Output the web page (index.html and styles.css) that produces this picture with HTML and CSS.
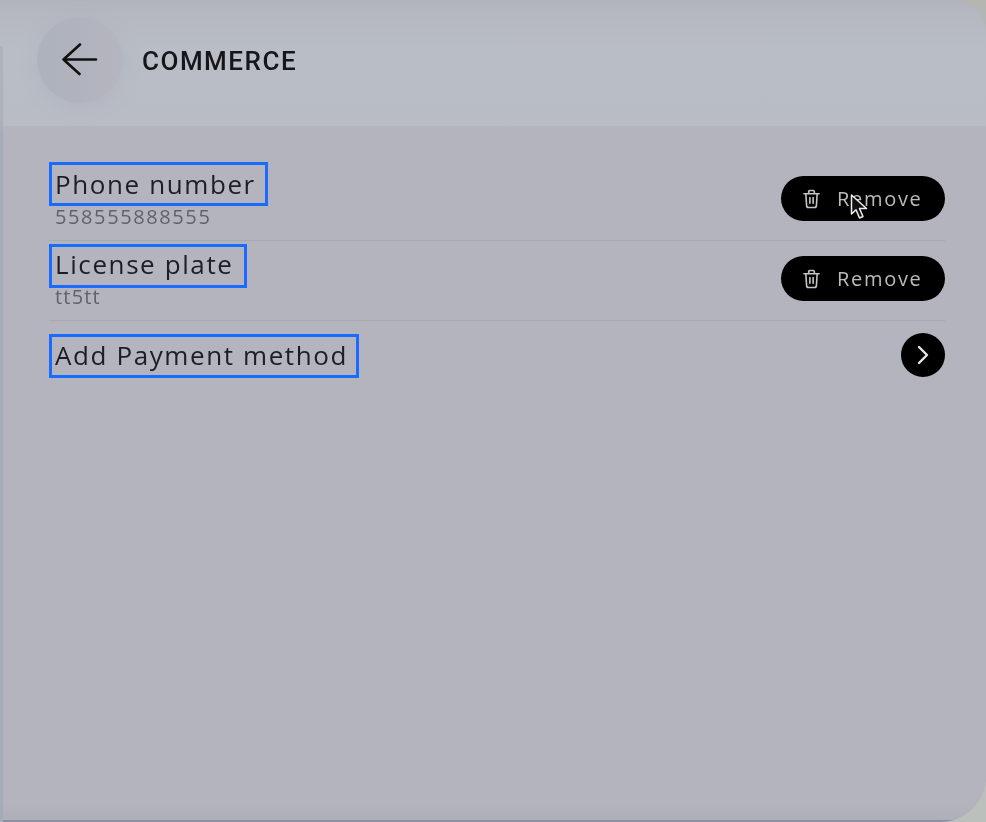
FILE: index.html
```html
<!DOCTYPE html>
<html lang="en">
<head>
<meta charset="utf-8">
<title>Commerce</title>
<link rel="stylesheet" href="styles.css">
</head>
<body>
<main class="panel">
  <header class="topbar">
    <button class="back" aria-label="Back">
      <svg width="36" height="36" viewBox="0 0 36 36" fill="none" stroke="#111" stroke-width="2.6" stroke-linecap="round" stroke-linejoin="round"><path d="M1.500 17.500H34M18 2.500 1.500 17.500 17.500 32"/></svg>
    </button>
    <h1 class="title">COMMERCE</h1>
  </header>
  <section class="content">
    <div class="row row-first">
      <div class="info">
        <div class="label">Phone number</div>
        <div class="value value-digits">558555888555</div>
      </div>
      <button class="remove">
        <svg class="trash" width="17" height="20" viewBox="0 0 18 20" fill="none" stroke="#c4c4c4" stroke-width="1.7" stroke-linecap="round" stroke-linejoin="round"><path d="M1 4.500H17M6 4.500V2.200C6 1.500 6.500 1 7.200 1H10.800C11.500 1 12 1.500 12 2.200V4.500M3 4.500 3.800 17C3.900 18.200 4.500 19 5.800 19H12.200C13.500 19 14.100 18.200 14.200 17L15 4.500M7.300 8.500V14.500M10.700 8.500V14.500"/></svg>
        <span>Remove</span>
      </button>
      <svg class="cursor" width="19" height="26" viewBox="0 0 19 26"><path d="M1.500 1V20L6 15.800 9.500 24 13 22.500 9.500 14.500H16.500Z" fill="#111" stroke="#eee" stroke-width="1.500" stroke-linejoin="round"/></svg>
    </div>
    <div class="row row-second">
      <div class="info">
        <div class="label label-license">License plate</div>
        <div class="value">tt5tt</div>
      </div>
      <button class="remove">
        <svg class="trash" width="17" height="20" viewBox="0 0 18 20" fill="none" stroke="#c4c4c4" stroke-width="1.7" stroke-linecap="round" stroke-linejoin="round"><path d="M1 4.500H17M6 4.500V2.200C6 1.500 6.500 1 7.200 1H10.800C11.500 1 12 1.500 12 2.200V4.500M3 4.500 3.800 17C3.900 18.200 4.500 19 5.800 19H12.200C13.500 19 14.100 18.200 14.200 17L15 4.500M7.300 8.500V14.500M10.700 8.500V14.500"/></svg>
        <span>Remove</span>
      </button>
    </div>
    <div class="row row-last">
      <div class="info">
        <div class="label label-add">Add Payment method</div>
      </div>
      <button class="go" aria-label="Open">
        <svg width="14" height="20" viewBox="0 0 14 20" fill="none" stroke="#e6e6e6" stroke-width="2.400" stroke-linecap="round" stroke-linejoin="round"><path d="M3 2 11 10 3 18"/></svg>
      </button>
    </div>
  </section>
</main>
</body>
</html>
```

FILE: styles.css
```css
* { box-sizing: border-box; }
html, body { margin: 0; height: 100%; }
body {
  width: 986px;
  height: 822px;
  overflow: hidden;
  background: linear-gradient(#b5b6b4, #bcc0bc);
  font-family: "Open Sans", "Noto Sans", sans-serif;
}
.panel {
  position: relative;
  width: 986px;
  height: 822px;
  border-radius: 0 32px 46px 0;
  overflow: hidden;
  display: flex;
  flex-direction: column;
  background: #b3b4bd;
}
.panel::before {
  content: "";
  position: absolute;
  z-index: 1;
  left: 0;
  top: 46px;
  bottom: 0;
  width: 3px;
  background: linear-gradient(#aeb2bd 0, #aeb2bd 70px, #a5abb7 90px);
}
.topbar {
  height: 126px;
  flex: none;
  display: flex;
  align-items: center;
  gap: 19px;
  padding: 0 0 6px 37px;
  background: linear-gradient(#b2b4bb 0, #b5b8c0 14px, #b9bdc6 50px, #b8bcc5 126px);
  filter: blur(.4px);
}
.back {
  width: 86px;
  height: 86px;
  border: 0;
  padding: 0;
  border-radius: 50%;
  background: linear-gradient(90deg, #adb2bd, #b4b5bf);
  box-shadow: 0 4px 16px rgba(165, 170, 185, .35);
  display: flex;
  align-items: center;
  justify-content: center;
}
.title {
  margin: 2px 0 0;
  font-family: Roboto, sans-serif;
  font-weight: 500;
  font-size: 26px;
  letter-spacing: 1.5px;
  color: #15161a;
}
.content {
  flex: 1;
  padding: 36px 41px 0 49px;
  background: linear-gradient(#b3b4bd 0, #b3b4bd 676px, #aeafb9 694px, #8f90a3 694px);
  filter: blur(.4px);
}
.row {
  display: flex;
  justify-content: space-between;
  align-items: center;
  height: 80px;
  border-top: 1px solid #a6a8b4;
}
.row-first { border-top: 0; height: 78px; position: relative; padding-bottom: 5px; }
.row-second { padding-bottom: 4px; }
.row-second .info { padding-top: 3px; }
.row-second .value { margin-top: -2px; }
.row-last { align-items: flex-start; padding-top: 13px; }
.info { align-self: flex-start; display: flex; flex-direction: column; align-items: flex-start; }
.label {
  border: 3px solid #1a6bff;
  padding: 0 9px 0 3px;
  height: 44px;
  font-size: 26px;
  line-height: 38px;
  letter-spacing: 1.6px;
  color: #1d1e24;
  white-space: nowrap;
}
.label-license { padding-right: 11px; line-height: 34px; }
.label-add { padding-right: 8px; line-height: 36px; }
.value {
  padding-left: 6px;
  font-size: 20px;
  line-height: 22px;
  letter-spacing: 1.2px;
  color: #5f626e;
}
.value-digits { letter-spacing: 1.6px; }
.remove {
  width: 164px;
  height: 45px;
  border: 0;
  padding: 0 0 0 22px;
  border-radius: 23px;
  background: #000;
  color: #bcbcbc;
  font: 400 20px "Open Sans", sans-serif;
  letter-spacing: 1.7px;
  display: flex;
  align-items: center;
  gap: 17px;
}
.go {
  width: 44px;
  height: 44px;
  margin-top: -1px;
  border: 0;
  padding: 0;
  border-radius: 50%;
  background: #000;
  display: flex;
  align-items: center;
  justify-content: center;
}
.cursor { position: absolute; left: 801px; top: 32px; }
```
